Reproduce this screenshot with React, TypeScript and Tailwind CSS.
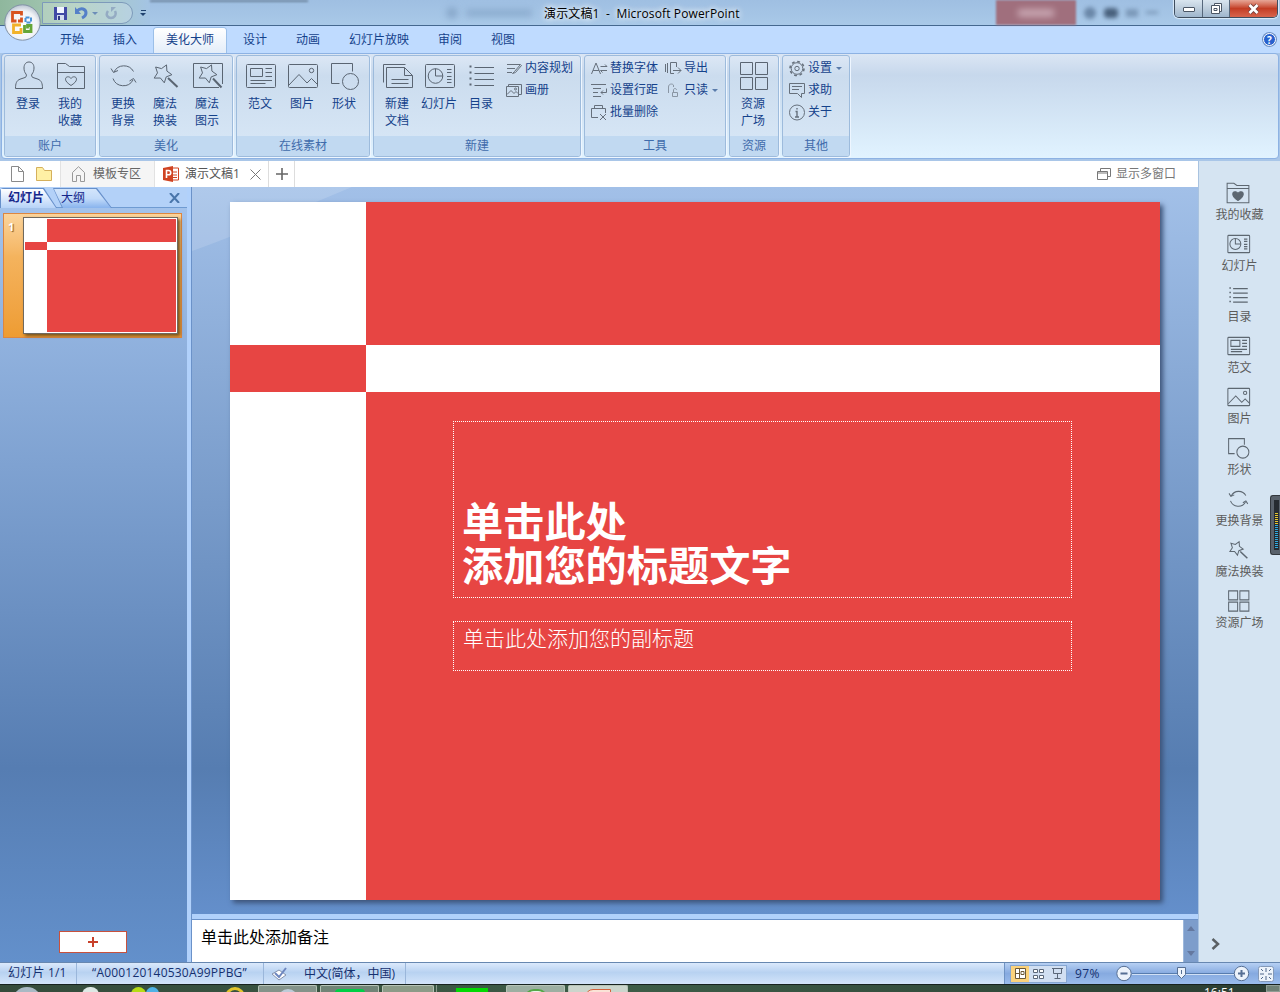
import type { ReactNode } from 'react';

type IconName =
  | 'user' | 'folder' | 'folderSolid' | 'refresh' | 'wand' | 'frameWand' | 'article' | 'image'
  | 'shape' | 'newDoc' | 'slide' | 'list' | 'grid';

const STAR = 'M17.5 4.9l.4 6.2 5 3.6-5.7 2.2-1.9 5.9-3.9-4.8-6.2.1 3.3-5.2L6.6 7l5.9 1.6z';

const glyphs: Record<IconName, ReactNode> = {
  user: (
    <path d="M3.5 28.5h27c0-5-1-8-4.5-9.3l-5-1.7c-1.8-.8-1.6-2.3-1-3.5 1.3-1.5 2-3.5 2-6 0-3.8-2-6-5-6s-5 2.2-5 6c0 2.5.7 4.5 2 6 .6 1.2.8 2.7-1 3.5l-5 1.7c-3.5 1.3-4.5 4.3-4.5 9.3z" />
  ),
  folder: (
    <>
      <path d="M3.5 28.5v-25h8l4 3h15v22zM3.5 12.5h27" />
      <path d="M17 25.5c-3-2-5.5-4-5.5-6.3 0-3 4-3.2 5.5-.7 1.5-2.5 5.5-2.3 5.5.7 0 2.3-2.5 4.3-5.5 6.3z" />
    </>
  ),
  folderSolid: (
    <>
      <path d="M1.5 29v-26h9l4 3h16v23zM1.5 10h29" />
      <path fill="currentColor" d="M16 26c-4-2.5-7-5-7-8.3 0-4 5.2-4.2 7-1 1.8-3.2 7-3 7 1 0 3.3-3 5.8-7 8.3z" />
    </>
  ),
  refresh: (
    <>
      <path d="M7 12A11 11 0 0 1 26.5 11.5M6 18.5A11 11 0 0 0 26 20" />
      <path d="M4 8.5l2.500 4 4.5-2M22.5 21l4-2.500 2.5 4" />
    </>
  ),
  wand: (
    <>
      <path d={STAR} />
      <path strokeWidth="2" d="M19 18l9.5 9" />
    </>
  ),
  frameWand: (
    <>
      <path d="M28 27.5H2.5v-24h29V24" />
      <path d={STAR} transform="translate(3 0)" />
      <path strokeWidth="2" d="M22 18.5l8.5 9" />
    </>
  ),
  article: (
    <>
      <rect x="2.5" y="4.5" width="29" height="23" rx="1" />
      <path d="M6.5 8.5h12v8h-12zM21.5 8.5H28M21.5 12.5H28M21.5 16.5H28M6.5 20.5H28M6.5 23.5h15" />
    </>
  ),
  image: (
    <>
      <rect x="2.5" y="4.5" width="29" height="23" rx="1" />
      <circle cx="25.5" cy="10.5" r="2.2" />
      <path d="M3 25l10-10.5 8 8.5 4.5-4.5 6 6" />
    </>
  ),
  shape: (
    <>
      <path d="M24.5 11.5v-8h-21v20h8" />
      <circle cx="22.5" cy="21.5" r="8" />
    </>
  ),
  newDoc: (
    <>
      <path d="M5.5 7.5h18l8 8v12h-26zM23.5 7.5v8h8M10.5 19.5h17M10.5 23.5h17" />
      <path d="M2.5 22.5v-18h22" />
    </>
  ),
  slide: (
    <>
      <rect x="2.5" y="4.5" width="29" height="23" rx="1" />
      <circle cx="12.5" cy="16" r="7.3" />
      <path d="M12.5 8.5V16H20M24 9.5h4.5M24 12.5h4.5M24 16.5h4.5M24 19.5h4.5M24 22.5h4.5" />
    </>
  ),
  list: (
    <>
      <path d="M9.5 7.5H29M9.5 13.5H29M9.5 19.5H29M9.5 25.5H29" />
      <path strokeWidth="2" d="M4.5 6.5h2M4.5 12.5h2M4.5 18.5h2M4.5 24.5h2" />
    </>
  ),
  grid: (
    <path d="M3.5 2.5h12v12h-12zM18.5 2.5h12v12h-12zM3.5 17.5h12v12h-12zM18.5 17.5h12v12h-12z" />
  ),
};

interface IconProps {
  name: IconName;
  size?: number;
  stroke?: number;
}

const Icon = ({ name, size = 32, stroke = 1 }: IconProps) => (
  <svg
    width={size}
    height={size}
    viewBox="0 0 32 32"
    fill="none"
    stroke="currentColor"
    strokeWidth={stroke}
    className="shrink-0 overflow-visible"
  >
    {glyphs[name]}
  </svg>
);

const SmallIcon = ({ children }: { children: ReactNode }) => (
  <svg width="17" height="17" viewBox="0 0 17 17" fill="none" stroke="#66707c" className="shrink-0 overflow-visible">
    {children}
  </svg>
);

const BigButton = ({ icon, lines }: { icon: IconName; lines: string[] }) => (
  <div className="flex w-[42px] flex-col items-center pt-1 text-[#5a6572]">
    <Icon name={icon} />
    <div className="mt-[3px] text-center leading-[17px] whitespace-nowrap text-[#15428b]">
      {lines.map((line) => (
        <div key={line}>{line}</div>
      ))}
    </div>
  </div>
);

interface SmallButtonProps {
  label: string;
  icon: ReactNode;
  arrow?: boolean;
}

const SmallButton = ({ label, icon, arrow }: SmallButtonProps) => (
  <div className="flex h-[22px] items-center whitespace-nowrap">
    <SmallIcon>{icon}</SmallIcon>
    <span className="ml-[2px]">{label}</span>
    {arrow && <span className="ml-1 border-x-[3px] border-t-[3px] border-x-transparent border-t-[#5a7cab]" />}
  </div>
);

const Group = ({ title, width, children }: { title: string; width: string; children: ReactNode }) => (
  <div
    className={`${width} flex h-[102px] shrink-0 flex-col overflow-hidden rounded-[3px] border border-[#9dbbdc] bg-linear-to-b from-[#dce7f5] via-[#cbdcee] via-20% to-[#d9e8f7] shadow-[1px_1px_0_#eef6ff]`}
  >
    <div className="flex flex-1 pl-[2px]">{children}</div>
    <div className="h-5 bg-[#c1d9f1] text-center leading-[19px] text-[#3f6bab]">{title}</div>
  </div>
);

const TitleBar = () => (
  <header className="flex h-[26px] border-b border-[#45688f] bg-linear-to-b from-[#9fbfe2] to-[#a9c9e8]">
    <div className="flex h-[25px] w-[150px] items-start bg-linear-to-r from-[#8fb79d] via-[#a9cbb9] to-[#a4c4e4] pt-[2px] pl-[42px]">
      <div className="flex h-[22px] w-[91px] items-center gap-[7px] rounded-r-full border border-[#7d9aba] bg-white/20 pl-[10px]">
        <svg width="15" height="15" viewBox="0 0 15 15">
          <path d="M1 1h13v13H1z" fill="#4149a5" />
          <path d="M4 1h7v6H4z" fill="#f2f5ff" />
          <path d="M4 9h7v5H4z" fill="#d4dcf0" />
          <path d="M5 10h2v4H5z" fill="#313984" />
        </svg>
        <svg width="13" height="14" viewBox="0 0 13 14" fill="none" stroke="#5580c8" strokeWidth="3">
          <path d="M2 5c4-4 9-2 9 2 0 3-2 4-4 5" />
          <path d="M0 1v7h6z" fill="#5580c8" stroke="none" />
        </svg>
        <span className="-ml-[3px] border-x-[3px] border-t-[3px] border-x-transparent border-t-[#6c8db8]" />
        <svg width="12" height="13" viewBox="0 0 12 13" fill="none" stroke="#94abc3" strokeWidth="2.5">
          <path d="M3 4c-3 4 0 7 3 7s6-3 4-7" />
          <path d="M6 5V0h5z" fill="#94abc3" stroke="none" />
        </svg>
      </div>
      <div className="ml-[7px] flex flex-col items-center pt-2">
        <span className="h-px w-[5px] bg-[#20426f]" />
        <span className="mt-[2px] border-x-[3px] border-t-[3px] border-x-transparent border-t-[#20426f]" />
      </div>
    </div>
    <div className="h-[2px] w-[158px] bg-[#6c849e] blur-[1px]" />
    <div className="flex w-[236px] items-center gap-2 pl-[138px]">
      <span className="h-3 w-3 rounded-full bg-[#6f8fb3]/50 blur-[3px]" />
      <span className="h-2 w-[66px] bg-[#6f8fb3]/40 blur-[3px]" />
    </div>
    <div className="w-[452px] pt-[5px] leading-[17px] tracking-[0.13px] whitespace-pre text-black [text-shadow:0_0_6px_#fff,0_0_6px_#fff]">
      演示文稿1  -  Microsoft PowerPoint
    </div>
    <div className="flex h-[25px] w-20 items-center justify-center bg-[#a06f7d] blur-[1px]">
      <span className="h-2 w-9 bg-[#c7a5b1] blur-[3px]" />
    </div>
    <div className="flex w-[98px] items-center gap-2 pl-2 blur-[2px]">
      <span className="h-3 w-3 rounded-full bg-[#6a87a8]" />
      <span className="h-[10px] w-[14px] rounded bg-[#49617d]" />
      <span className="h-2 w-3 bg-[#7c99b9]" />
      <span className="h-[3px] w-3 bg-[#7c99b9]" />
    </div>
    <div className="flex h-[18px] w-[104px] overflow-hidden rounded-b-[5px] border border-t-0 border-[#3f4d5e] shadow-[0_0_1px_1px_#dcecfa]">
      <div className="flex w-[28px] items-center justify-center border-r border-[#56677b] bg-linear-to-b from-[#d9e5ef] via-[#bdcddc] via-50% to-[#9fb6cd] pt-[2px]">
        <span className="h-[5px] w-3 rounded-[1px] border border-[#4b5665] bg-white" />
      </div>
      <div className="flex w-[27px] items-center justify-center border-r border-[#56677b] bg-linear-to-b from-[#d9e5ef] via-[#bdcddc] via-50% to-[#9fb6cd]">
        <svg width="13" height="13" viewBox="0 0 13 13" fill="#fff" stroke="#4b5665">
          <path d="M4.5 1.5h7v8h-7z" />
          <path d="M1.5 3.5h8v8h-8z" />
          <path d="M4 6.5h3v2H4z" />
        </svg>
      </div>
      <div className="flex flex-1 items-center justify-center bg-linear-to-b from-[#e6a697] via-[#c33d24] via-50% to-[#d8644c]">
        <svg width="13" height="12" viewBox="0 0 13 12" fill="none">
          <path d="M2.5 2l8 8M10.5 2l-8 8" stroke="#713c3a" strokeWidth="4.5" />
          <path d="M2.5 2l8 8M10.5 2l-8 8" stroke="#fff" strokeWidth="2.8" />
        </svg>
      </div>
    </div>
  </header>
);

const OfficeButton = () => (
  <svg className="absolute top-[3px] left-[3px]" width="40" height="40" viewBox="0 0 40 40" fill="none">
    <defs>
      <radialGradient id="orb" cx="50%" cy="60%" r="60%">
        <stop offset="0" stopColor="#ffffff" />
        <stop offset="0.7" stopColor="#f0f2f6" />
        <stop offset="1" stopColor="#b9c4d1" />
      </radialGradient>
    </defs>
    <circle cx="19.5" cy="19.5" r="17.7" fill="url(#orb)" stroke="#8292a6" />
    <g strokeWidth="2.8">
      <path d="M18.500 12.500v-3h-9v8.500h4M18.500 14.500v3.500H15" stroke="#d8531e" />
      <path d="M22.500 14.500h5.500v5h-5.500z" stroke="#4a93d8" strokeWidth="2" strokeDasharray="4 1.5" />
      <path d="M18 22h-7.500v7.500H18v-4.500" stroke="#f2b229" />
      <path d="M21.500 22v6.500h6.500v-6h-3.500v3" stroke="#65a637" />
    </g>
  </svg>
);

const tabs = ['开始', '插入', '美化大师', '设计', '动画', '幻灯片放映', '审阅', '视图'];

const RibbonTabs = () => (
  <nav className="flex h-[27px] gap-[5px] bg-[#bfdbff] pl-12 leading-[28px] text-[#15428b]">
    {tabs.map((tab) => (
      <div
        key={tab}
        className={
          tab === '美化大师'
            ? 'mt-[2px] h-[25px] rounded-t-[3px] bg-linear-to-b from-white to-[#e3edf9] px-3 leading-[24px] shadow-[0_0_0_1px_#9bbfe8]'
            : 'px-3'
        }
      >
        {tab}
      </div>
    ))}
    <div className="mt-[7px] mr-[4px] ml-auto flex h-[13px] w-[13px] items-center justify-center rounded-full border border-white bg-[#2861ce] text-[10px] font-bold text-white shadow-[0_0_0_1px_#6d90c5]">
      ?
    </div>
  </nav>
);

const Ribbon = () => (
  <section className="h-[108px] bg-[#a9c6e8] px-px">
    <div className="flex h-[106px] gap-[3px] rounded-[4px] border border-[#8db2e3] bg-linear-to-b from-[#dbe6f4] via-[#c7d8ec] via-20% to-[#e1f3ff] pt-px pl-[2px]">
      <Group title="账户" width="w-[92px]">
        <BigButton icon="user" lines={['登录']} />
        <BigButton icon="folder" lines={['我的', '收藏']} />
      </Group>
      <Group title="美化" width="w-[134px]">
        <BigButton icon="refresh" lines={['更换', '背景']} />
        <BigButton icon="wand" lines={['魔法', '换装']} />
        <BigButton icon="frameWand" lines={['魔法', '图示']} />
      </Group>
      <Group title="在线素材" width="w-[134px]">
        <BigButton icon="article" lines={['范文']} />
        <BigButton icon="image" lines={['图片']} />
        <BigButton icon="shape" lines={['形状']} />
      </Group>
      <Group title="新建" width="w-[208px]">
        <BigButton icon="newDoc" lines={['新建', '文档']} />
        <BigButton icon="slide" lines={['幻灯片']} />
        <BigButton icon="list" lines={['目录']} />
        <div className="ml-1 pt-px text-[#15428b]">
          <SmallButton label="内容规划" icon={<path d="M1 4.5h13M1 8.5h8M1 12.5h5M14.5 4.5l-6 7-2 2 3-1 6-7z" />} />
          <SmallButton
            label="画册"
            icon={
              <>
                <path d="M.5 4.5h12v10H.5zM2.5 4.5v-2h13v10h-3M1 12.5l4-4 3 3 2-2 2 2" />
                <circle cx="9.5" cy="7" r="1" />
              </>
            }
          />
        </div>
      </Group>
      <Group title="工具" width="w-[142px]">
        <div className="flex gap-[7px] pt-px pl-1 text-[#15428b]">
          <div>
            <SmallButton label="替换字体" icon={<path d="M.5 14L5 3l4.5 11M2 10.5h6M9.5 6.5H16l-2-2M16 10.5H9.5l2 2" />} />
            <SmallButton label="设置行距" icon={<path d="M0 2.5h15M2 6.5h8M2 10.5h5M2 14.5h8M15.5 6.5v4H10l2-2M10 10.5l2 2" />} />
            <SmallButton label="批量删除" icon={<path d="M7 13.5H.5v-9h14V9M3.5 4V1.5h8V4M9 10l6 6M15 10l-6 6" />} />
          </div>
          <div>
            <SmallButton label="导出" icon={<path d="M.5 4v8M2.5 3v10M9 13.5H5.5v-11h6V7M8 10.5h8l-3-3M16 10.5l-3 3" />} />
            <SmallButton
              label="只读"
              arrow
              icon={
                <g stroke="#8a96a4">
                  <path d="M3.5 11V5c0-3.5 4-3.5 5-2v2M7.5 10.5h5v4h-5zM8.5 10V8c0-2 3-2 3 0" />
                </g>
              }
            />
          </div>
        </div>
      </Group>
      <Group title="资源" width="w-[50px]">
        <BigButton icon="grid" lines={['资源', '广场']} />
      </Group>
      <Group title="其他" width="w-[68px]">
        <div className="ml-1 pt-px text-[#15428b]">
          <SmallButton
            label="设置"
            arrow
            icon={
              <>
                <circle cx="8" cy="8.5" r="7" strokeWidth="1.6" strokeDasharray="2.8 2.7" />
                <circle cx="8" cy="8.5" r="5.8" />
                <circle cx="8" cy="8.5" r="2.2" />
              </>
            }
          />
          <SmallButton label="求助" icon={<path d="M.5 1.5h15v10h-3v4l-4-4h-8zM3 4.5h10M3 7.5h7" />} />
          <SmallButton
            label="关于"
            icon={
              <>
                <circle cx="8" cy="8.5" r="7.5" />
                <path d="M6.5 7.5H8V13M6 13h4M8 4v1.5" strokeWidth="1.4" />
              </>
            }
          />
        </div>
      </Group>
    </div>
  </section>
);

const DocumentTabs = () => (
  <div className="flex h-[26px] items-center bg-white text-[#555]">
    <div className="flex w-[60px] items-center gap-3 pl-[11px]">
      <svg width="13" height="16" viewBox="0 0 13 16" fill="none" stroke="#8a8a8a">
        <path d="M.5.5h7l5 5v10H.5zM7.5.5v5h5" />
      </svg>
      <svg width="16" height="14" viewBox="0 0 16 14" fill="#fff0a5" stroke="#d5b05c">
        <path d="M.5 13.5V.5h6l2 3h7v10z" />
      </svg>
    </div>
    <div className="flex h-full w-[95px] items-center border-x border-[#e2e2e2] bg-[#f5f5f5] pl-[10px] text-[#666]">
      <svg width="16" height="16" viewBox="0 0 16 16" fill="none" stroke="#999">
        <path d="M1.5 6.5v9h4v-6h4v6h4v-9L7.5.7z" />
      </svg>
      <span className="ml-[6px]">模板专区</span>
    </div>
    <div className="flex h-full w-[114px] items-center border-r border-[#ddd] pl-2">
      <svg width="16" height="16" viewBox="0 0 16 16">
        <path d="M9 2h6.5v12H9z" fill="#fff" stroke="#d04423" />
        <path d="M10 6h4M10 9h4M10 11.5h4" stroke="#d04423" />
        <path d="M0 2l10-2v16L0 14z" fill="#d04423" />
        <path d="M3.5 12V4.5h2c3 0 3 4.3 0 4.3h-2" fill="none" stroke="#fff" strokeWidth="1.6" />
      </svg>
      <span className="ml-[6px] w-[65px] whitespace-nowrap">演示文稿1</span>
      <svg width="11" height="11" viewBox="0 0 11 11" stroke="#777">
        <path d="M.5.5l10 10M10.5.5l-10 10" />
      </svg>
    </div>
    <div className="flex h-full w-[26px] items-center justify-center border-r border-[#ddd]">
      <svg width="12" height="12" viewBox="0 0 12 12" stroke="#666" strokeWidth="1.6">
        <path d="M6 0v12M0 6h12" />
      </svg>
    </div>
    <div className="mr-[22px] ml-auto flex items-center gap-[5px] text-[#777]">
      <svg width="14" height="12" viewBox="0 0 14 12" fill="none" stroke="#777">
        <path d="M.5 3.5h10v8H.5zM.5 5h10M3.5 3V.5h10v8h-3" />
      </svg>
      <span>显示多窗口</span>
    </div>
  </div>
);

const Thumbnail = () => (
  <div className="mt-[5px] ml-[3px] flex h-[125px] w-[179px] border border-[#dd8740] bg-linear-to-b from-[#fbd49b] via-[#f4b35d] via-35% to-[#ee9c32] pt-[3px]">
    <span className="w-[19px] pt-[2px] pl-1 text-[11px] font-bold text-white [text-shadow:1px_1px_1px_#865a25]">1</span>
    <div className="grid h-[117px] w-[155px] grid-cols-[22px_1fr] grid-rows-[23px_8px_1fr] border border-[#70695e] bg-white p-px shadow-[2px_2px_3px_#76521f]">
      <div />
      <div className="bg-[#e74543]" />
      <div className="bg-[#e74543]" />
      <div />
      <div />
      <div className="bg-[#e74543]" />
    </div>
  </div>
);

const SlidePanel = () => (
  <aside className="flex w-[187px] flex-col bg-linear-to-b from-[#a6c5ee] via-[#567db2] via-75% to-[#6390cb]">
    <div className="flex h-[21px] border-b border-[#6f9bd2] bg-[#b3d1f8] pt-px text-[#15268b]">
      <div className="z-10 h-5 w-[62px] rounded-tl-[4px] bg-[#668fca] pt-px pr-px pl-px [clip-path:polygon(0_0,44px_0,57px_100%,0_100%)]">
        <div className="h-full bg-linear-to-b from-white to-[#b7d3f8] pl-[7px] leading-[18px] font-bold [clip-path:polygon(0_0,42px_0,55px_100%,0_100%)]">
          幻灯片
        </div>
      </div>
      <div className="-ml-[9px] h-5 w-[60px] bg-[#668fca] pt-px pl-px [clip-path:polygon(0_0,44px_0,59px_100%,9px_100%)]">
        <div className="h-full bg-linear-to-b from-[#d3e5fb] via-[#c1daf9] via-50% to-[#88b3ed] pl-[7px] leading-[18px] [clip-path:polygon(0_0,42px_0,57px_100%,9px_100%)]">
          大纲
        </div>
      </div>
      <svg className="mt-[5px] mr-[7px] ml-auto" width="11" height="10" viewBox="0 0 11 10" stroke="#4a76ab" strokeWidth="2">
        <path d="M1 0l9 10M10 0L1 10" />
      </svg>
    </div>
    <Thumbnail />
    <div className="mt-auto mb-[9px] ml-[59px] flex h-[22px] w-[68px] items-center justify-center border border-[#c8513c] bg-white">
      <svg width="10" height="10" viewBox="0 0 10 10" stroke="#c8402a" strokeWidth="2">
        <path d="M5 0v10M0 5h10" />
      </svg>
    </div>
  </aside>
);

const placeholder = 'w-[619px] border border-dotted border-white text-white';

const Slide = () => (
  <div className="relative ml-[38px] grid h-[698px] w-[930px] grid-cols-[136px_1fr] grid-rows-[143px_47px_1fr] bg-white shadow-[3px_3px_5px_#3c5378]">
    <div />
    <div className="bg-[#e74543]" />
    <div className="bg-[#e74543]" />
    <div />
    <div />
    <div className="flex flex-col bg-[#e74543] pt-[29px] pl-[87px]">
      <div className={`${placeholder} flex h-[177px] flex-col justify-end pb-[10px] pl-2`}>
        <p className="text-[41.2px] leading-[43.5px] font-bold">
          单击此处
          <br />
          添加您的标题文字
        </p>
      </div>
      <div className={`${placeholder} mt-[23px] h-[50px] pt-px pl-[9px] text-[21px] leading-[30px] font-light`}>
        单击此处添加您的副标题
      </div>
    </div>
  </div>
);

const Workspace = () => (
  <main className="flex flex-1 flex-col border-l border-[#6b92c9]">
    <div className="relative h-[727px] bg-linear-to-b from-[#a2c0e8] via-[#567db1] via-80% to-[#648fcb] pt-[15px]">
      <svg className="absolute top-0 left-0" width="160" height="64" viewBox="0 0 160 64">
        <path d="M0 64Q50 46 160 0H0z" fill="#fff" fillOpacity="0.14" />
      </svg>
      <Slide />
    </div>
    <div className="h-[6px] border-b border-[#6b92c9] bg-[#b1d1fb]" />
    <div className="flex flex-1 bg-white">
      <div className="flex-1 pt-[5px] pl-[9px] text-base text-black">单击此处添加备注</div>
      <div className="flex w-[15px] flex-col items-center justify-between border-l border-[#9db8dc] bg-[#7d9dcb] py-[6px]">
        <span className="border-x-4 border-b-[5px] border-x-transparent border-b-[#64789f]" />
        <span className="border-x-4 border-t-[5px] border-x-transparent border-t-[#64789f]" />
      </div>
    </div>
  </main>
);

const shortcuts: { icon: IconName; label: string }[] = [
  { icon: 'folderSolid', label: '我的收藏' },
  { icon: 'slide', label: '幻灯片' },
  { icon: 'list', label: '目录' },
  { icon: 'article', label: '范文' },
  { icon: 'image', label: '图片' },
  { icon: 'shape', label: '形状' },
  { icon: 'refresh', label: '更换背景' },
  { icon: 'wand', label: '魔法换装' },
  { icon: 'grid', label: '资源广场' },
];

const ShortcutBar = () => (
  <aside className="flex w-[82px] flex-col border-l border-[#a9c3e0] bg-[#d5e4f2] pt-5">
    {shortcuts.map(({ icon, label }) => (
      <div key={label} className="flex h-[51px] flex-col items-center text-[#5d6771]">
        <div className="mr-[3px]">
          <Icon name={icon} size={24} stroke={1.35} />
        </div>
        <span className="mt-px leading-[18px] text-[#5c5c5c]">{label}</span>
      </div>
    ))}
    <svg className="mt-auto mb-3 ml-3" width="10" height="12" viewBox="0 0 10 12" fill="none" stroke="#5b6064" strokeWidth="2.5">
      <path d="M1.5 1l5.5 5-5.5 5" />
    </svg>
  </aside>
);

// Level meter peeking in from the right edge of the desktop
const Meter = () => (
  <div className="absolute top-[495px] right-0 flex h-[60px] w-[10px] flex-col rounded-l-[3px] border border-r-0 border-[#33383e] bg-[#59616b] pt-1 pl-[3px]">
    <svg width="5" height="50" viewBox="0 0 5 50" strokeWidth="3" strokeDasharray="1 1">
      <path d="M0 0h5v50H0z" fill="#262b31" stroke="none" />
      <path d="M2.5 13v12" stroke="#e6c62e" />
      <path d="M2.5 25v24" stroke="#2fa9e0" />
    </svg>
  </div>
);

const StatusBar = () => (
  <footer className="flex h-[22px] border-t border-[#6787b0] bg-linear-to-b from-[#dbe9fc] via-[#b8d2f1] via-45% to-[#d3e4fa] leading-5 text-[#15306f]">
    <div className="w-[77px] border-r border-[#9ab6da] pl-2 tracking-[0.2px] whitespace-nowrap">幻灯片 1/1</div>
    <div className="w-[187px] border-r border-[#9ab6da] pl-[15px] tracking-[0.2px] whitespace-nowrap">“A000120140530A99PPBG”</div>
    <div className="flex w-[142px] items-center border-r border-[#9ab6da] pl-[7px]">
      <svg width="17" height="16" viewBox="0 0 17 16">
        <path d="M1 8l7-4 7 5-7 5z" fill="#fff" stroke="#8492ad" />
        <path d="M4 7l4 4 7-9" fill="none" stroke="#6d86bf" strokeWidth="2" />
      </svg>
      <span className="ml-4 whitespace-nowrap">中文(简体，中国)</span>
    </div>
    <div className="ml-auto flex w-[276px] items-center border-l border-[#6f93c4] bg-linear-to-b from-[#b7d0f3] via-[#86aae0] via-50% to-[#9bbcec] pl-[5px]">
      <div className="flex h-[18px] w-[57px] border border-[#86a6d1] bg-[#d1dff2]">
        <div className="flex w-[18px] items-center justify-center bg-[#fbd27b]">
          <svg width="11" height="11" viewBox="0 0 11 11" fill="#fff" stroke="#6c5a38">
            <path d="M.5.5h10v10H.5zM4.5.5v10M6 3.5h3v3H6zM.5 5.5h4" />
          </svg>
        </div>
        <div className="flex w-[19px] items-center justify-center">
          <svg width="11" height="10" viewBox="0 0 11 10" fill="#fff" stroke="#5b6779">
            <path d="M.5.5h4v3h-4zM6.5.5h4v3h-4zM.5 6.5h4v3h-4zM6.5 6.5h4v3h-4z" />
          </svg>
        </div>
        <div className="flex w-[18px] items-center justify-center">
          <svg width="11" height="11" viewBox="0 0 11 11" fill="none" stroke="#5b6779">
            <path d="M0 .5h11M1.5.5v5h8v-5M5.5 6v4M2.5 10.5h6" />
          </svg>
        </div>
      </div>
      <span className="ml-[8px] w-[41px] tracking-[0.4px]">97%</span>
      <svg width="134" height="18" viewBox="0 0 134 18" fill="#edf3fb" stroke="#566f94">
        <path d="M16 8.5h102" stroke="#577cae" />
        <path d="M16 9.5h102" stroke="#d1e1f6" />
        <circle cx="8" cy="8.5" r="7.2" />
        <circle cx="125.5" cy="8.5" r="7.2" />
        <path d="M4.5 8.5h7M122 8.5h7M125.5 5v7" strokeWidth="2" />
        <path d="M61.5 2.5h8v7l-4 4-4-4zM65.5 5v4" />
      </svg>
      <svg className="ml-[8px]" width="16" height="16" viewBox="0 0 16 16" fill="none" stroke="#4f678a">
        <rect x=".5" y=".5" width="15" height="15" rx="2" fill="#edf3fb" stroke="#8499b8" />
        <path d="M8 2v4M8 10v4M2 8h4M10 8h4M3 3l2 2M13 3l-2 2M3 13l2-2M13 13l-2-2" />
      </svg>
    </div>
  </footer>
);

const taskButton = 'flex h-2 shrink-0 justify-center overflow-hidden rounded-t-[2px] border-x border-t border-[#b6c3b6] pt-[3px]';

const Taskbar = () => (
  <div className="flex h-2 overflow-hidden border-t border-[#17221f] bg-linear-to-r from-[#354b3b] via-[#3d5c47] to-[#2b3d32]">
    <div className="flex w-[258px] shrink-0 items-start pt-[2px]">
      <span className="ml-3 h-[30px] w-[30px] shrink-0 rounded-full bg-[#a9b9c4]" />
      <span className="ml-[40px] h-4 w-[17px] shrink-0 rounded-full bg-[#dde8e4]" />
      <span className="ml-8 h-5 w-[15px] shrink-0 rounded-full bg-[#b6dc16]" />
      <span className="h-5 w-[13px] shrink-0 rounded-full bg-[#4fb2e6]" />
      <span className="ml-[66px] h-5 w-5 shrink-0 rounded-full border-[3px] border-[#e3c52c]" />
    </div>
    <div className={`${taskButton} w-[59px] bg-[#84938a]`}>
      <span className="h-5 w-5 shrink-0 rounded-full bg-[#bdcbd8]" />
    </div>
    <div className={`${taskButton} ml-[3px] w-[59px] bg-[#718477]`}>
      <span className="h-5 w-[30px] shrink-0 rounded bg-[#00cf45]" />
    </div>
    <div className={`${taskButton} ml-[3px] w-[52px] bg-[#8c9b88]`} />
    <div className="ml-[2px] flex w-[70px] shrink-0 justify-center border-l border-[#8a9c8c] pt-[3px]">
      <span className="h-5 w-8 bg-[#04d904]" />
    </div>
    <div className={`${taskButton} w-[59px] bg-[#9dafa2]`}>
      <span className="h-5 w-6 rounded-full border-2 border-[#55a748] bg-[#e9f2e9]" />
    </div>
    <div className={`${taskButton} ml-[3px] w-[60px] bg-[#cbd5cc]`}>
      <span className="h-5 w-[26px] rounded-tl-[8px] border border-[#d4633c] bg-[#fae3d7]" />
    </div>
    <div className="ml-auto w-[62px] shrink-0 leading-[16px] text-white">16:51</div>
    <div className="w-[14px] shrink-0 border border-[#8f9d94] bg-[#6f8075]" />
  </div>
);

export default function App() {
  return (
    <div className="relative flex h-[992px] w-[1280px] flex-col overflow-hidden bg-[#a9c6e8] font-['Open_Sans','Noto_Sans_CJK_SC',sans-serif] text-[12px]">
      <TitleBar />
      <RibbonTabs />
      <Ribbon />
      <div className="flex flex-1">
        <div className="flex w-[1198px] flex-col">
          <DocumentTabs />
          <div className="flex flex-1">
            <SlidePanel />
            <div className="w-1 bg-[#b1d1fb]" />
            <Workspace />
          </div>
        </div>
        <ShortcutBar />
      </div>
      <StatusBar />
      <Taskbar />
      <OfficeButton />
      <Meter />
    </div>
  );
}
